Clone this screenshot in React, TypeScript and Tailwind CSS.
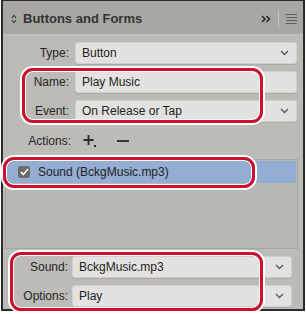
import React from "react";

const font = { fontFamily: '"Liberation Sans", Arial, sans-serif' };

function Chevron() {
  return (
    <svg width="9" height="6" viewBox="0 0 9 6" className="shrink-0">
      <path d="M1 1l3.5 3.5L8 1" fill="none" stroke="#5a5a5a" strokeWidth="1.4" />
    </svg>
  );
}

function Field({ value, select = true, className = "" }: { value: string; select?: boolean; className?: string }) {
  return (
    <div
      className={`h-[22px] flex items-center justify-between rounded-[3px] bg-[#e3e2e0] border border-[#d2d0cd] shadow-[0_1px_0_#adaba8] pl-[6px] pr-[7px] ${className}`}
    >
      <span className="text-[12px] text-[#222]">{value}</span>
      {select && <Chevron />}
    </div>
  );
}

function Row({ label, children, labelW = "w-[66px]", gap = "gap-[6px]" }: { label: string; children: React.ReactNode; labelW?: string; gap?: string }) {
  return (
    <div className={`flex items-center ${gap}`}>
      <span className={`${labelW} text-right text-[12px] text-[#262626]`}>{label}</span>
      {children}
    </div>
  );
}

function Annotation({ className }: { className: string }) {
  return (
    <div
      className={`absolute border-[3px] border-[#cc102e] rounded-[11px] shadow-[0_0_0_2px_#ffffff,inset_0_0_0_1px_#ffffff] pointer-events-none ${className}`}
    />
  );
}

export default function App() {
  return (
    <div className="relative w-[306px] h-[314px] bg-white" style={font}>
      <div className="ml-[1px] w-[304px] h-[311px] border-x-2 border-b-2 border-t border-[#2b2b2b] bg-[#bdbbb8] flex flex-col">
        {/* Header */}
        <div className="h-[34px] bg-[#a9a7a4] border-b border-[#c4c2bf] flex items-center pt-[3px] pl-[8px] pr-[6px]">
          <svg width="6" height="10" viewBox="0 0 6 10" className="mr-[6px]">
            <path d="M1 4l2-2.5L5 4M1 6l2 2.5L5 6" fill="none" stroke="#3a3a3a" strokeWidth="1.2" />
          </svg>
          <span className="text-[13px] font-bold text-[#333]">Buttons and Forms</span>
          <div className="ml-auto flex items-center">
            <svg width="10" height="8" viewBox="0 0 10 8">
              <path d="M1 1l3 3-3 3M5.5 1l3 3-3 3" fill="none" stroke="#2a2a2a" strokeWidth="1.6" />
            </svg>
            <div className="w-px h-[16px] bg-[#cac8c5] ml-[7px] mr-[7px]" />
            <div className="flex flex-col gap-[2px] w-[11px]">
              <div className="h-px bg-[#5e5e5e]" />
              <div className="h-px bg-[#5e5e5e]" />
              <div className="h-px bg-[#5e5e5e]" />
              <div className="h-px bg-[#5e5e5e]" />
            </div>
          </div>
        </div>

        {/* Body */}
        <div className="flex flex-col pt-[7px]">
          <div className="flex flex-col gap-[7px] pr-[6px]">
            <Row label="Type:">
              <Field value="Button" className="flex-1" />
            </Row>
            <Row label="Name:">
              <Field value="Play Music" select={false} className="flex-1" />
            </Row>
            <Row label="Event:">
              <Field value="On Release or Tap" className="flex-1" />
            </Row>
          </div>

          <div className="h-[22px] mt-[8px] flex items-center">
            <span className="w-[68px] text-right text-[12px] text-[#262626]">Actions:</span>
            <svg width="14" height="14" viewBox="0 0 14 14" className="ml-[12px]">
              <path d="M5.5 1v10M0.5 6h10" stroke="#2a2a2a" strokeWidth="1.8" />
              <rect x="11" y="11" width="2" height="2" fill="#2a2a2a" />
            </svg>
            <svg width="12" height="4" viewBox="0 0 12 4" className="ml-[20px]">
              <path d="M0 2h12" stroke="#2a2a2a" strokeWidth="1.8" />
            </svg>
          </div>

          {/* Actions list */}
          <div className="mt-[7px] ml-[2px] w-[293px] h-[90px] border border-[#a7a5a2] bg-[#b9b7b4] p-px">
            <div className="h-[22px] bg-[#94add2] flex items-center pl-[11px]">
              <div className="w-[12px] h-[12px] rounded-[2px] bg-[#6b6b6b] flex items-center justify-center">
                <svg width="9" height="8" viewBox="0 0 9 8">
                  <path d="M1 4l2.3 2.5L8 1" fill="none" stroke="#ffffff" strokeWidth="1.6" />
                </svg>
              </div>
              <span className="ml-[8px] text-[12px] text-[#1f1f1f]">Sound (BckgMusic.mp3)</span>
            </div>
          </div>

          <div className="flex flex-col gap-[7px] mt-[7px]">
            <Row label="Sound:" labelW="w-[65px]" gap="gap-[4px]">
              <Field value="BckgMusic.mp3" className="w-[220px]" />
            </Row>
            <Row label="Options:" labelW="w-[65px]" gap="gap-[4px]">
              <Field value="Play" className="w-[220px]" />
            </Row>
          </div>
        </div>
      </div>

      {/* Callouts */}
      <Annotation className="left-[22px] top-[68px] w-[241px] h-[55px]" />
      <Annotation className="left-[3px] top-[157px] w-[252px] h-[31px]" />
      <Annotation className="left-[10px] top-[252px] w-[253px] h-[59px]" />
    </div>
  );
}
